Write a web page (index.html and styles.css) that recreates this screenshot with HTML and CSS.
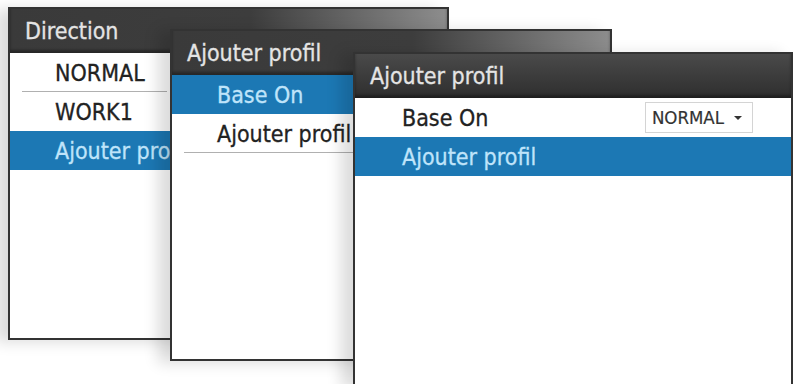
FILE: index.html
```html
<!DOCTYPE html>
<html>
<head>
<meta charset="utf-8">
<link rel="stylesheet" href="styles.css">
</head>
<body>
<div class="desk">
  <div class="win win1">
    <div class="title">Direction</div>
    <div class="row sep">NORMAL</div>
    <div class="row">WORK1</div>
    <div class="row sel">Ajouter profil</div>
  </div>
  <div class="win win2">
    <div class="title">Ajouter profil</div>
    <div class="row sel">Base On</div>
    <div class="row sep">Ajouter profil</div>
  </div>
  <div class="win win3">
    <div class="title">Ajouter profil</div>
    <div class="row field">
      <span>Base On</span>
      <span class="drop">NORMAL <span class="caret"></span></span>
    </div>
    <div class="row sel">Ajouter profil</div>
  </div>
</div>
</body>
</html>
```
FILE: styles.css
```css
html, body {
  margin: 0;
  padding: 0;
  background: #ffffff;
}
.desk {
  position: relative;
  width: 793px;
  height: 384px;
  overflow: hidden;
  font-family: "DejaVu Sans", sans-serif;
  font-stretch: condensed;
}
.win {
  position: absolute;
  background: #ffffff;
  border: 2px solid #333;
  box-shadow: -12px 2px 14px rgba(0,0,0,0.14);
  overflow: hidden;
  display: flex;
  flex-direction: column;
}
.win1 { left: 8px; top: 7px; width: 437px; height: 329px; }
.win2 { left: 170px; top: 29px; width: 438px; height: 328px; }
.win3 { left: 353px; top: 52px; width: 436px; height: 330px; }
.title {
  height: 44px;
  flex: none;
  display: flex;
  align-items: center;
  padding-left: 15px;
  color: #e4e4e4;
  font-size: 23px;
  -webkit-text-stroke: 0.3px #e4e4e4;
  background: linear-gradient(to right, #3a3a3a 0%, #3d3d3d 55%, #8d8d8d 100%);
  box-shadow: inset 0 -3px 3px rgba(0,0,0,0.35);
}
.win3 .title {
  background: linear-gradient(#4a4a4a, #2e2e2e);
}
.row {
  height: 39px;
  flex: none;
  display: flex;
  align-items: center;
  padding-left: 45px;
  color: #222;
  font-size: 23px;
  -webkit-text-stroke: 0.3px currentColor;
  white-space: nowrap;
  position: relative;
}
.win3 .row { padding-left: 47px; }
.sep::after {
  content: "";
  position: absolute;
  left: 12px;
  right: 12px;
  bottom: 0;
  height: 1px;
  background: #b0b0b0;
}
.win1 .sep::after { right: 280px; }
.sel {
  background: #1c78b4;
  color: #bfe4fa;
}
.field {
  justify-content: space-between;
  padding-right: 38px;
}
.drop {
  display: flex;
  align-items: center;
  gap: 10px;
  height: 29px;
  padding: 0 10px 0 6px;
  border: 1px solid #d4d4d4;
  font-size: 18.5px;
  color: #333;
  -webkit-text-stroke: 0.2px #333;
}
.caret {
  width: 0;
  height: 0;
  border-left: 4px solid transparent;
  border-right: 4px solid transparent;
  border-top: 4px solid #333;
}
```
